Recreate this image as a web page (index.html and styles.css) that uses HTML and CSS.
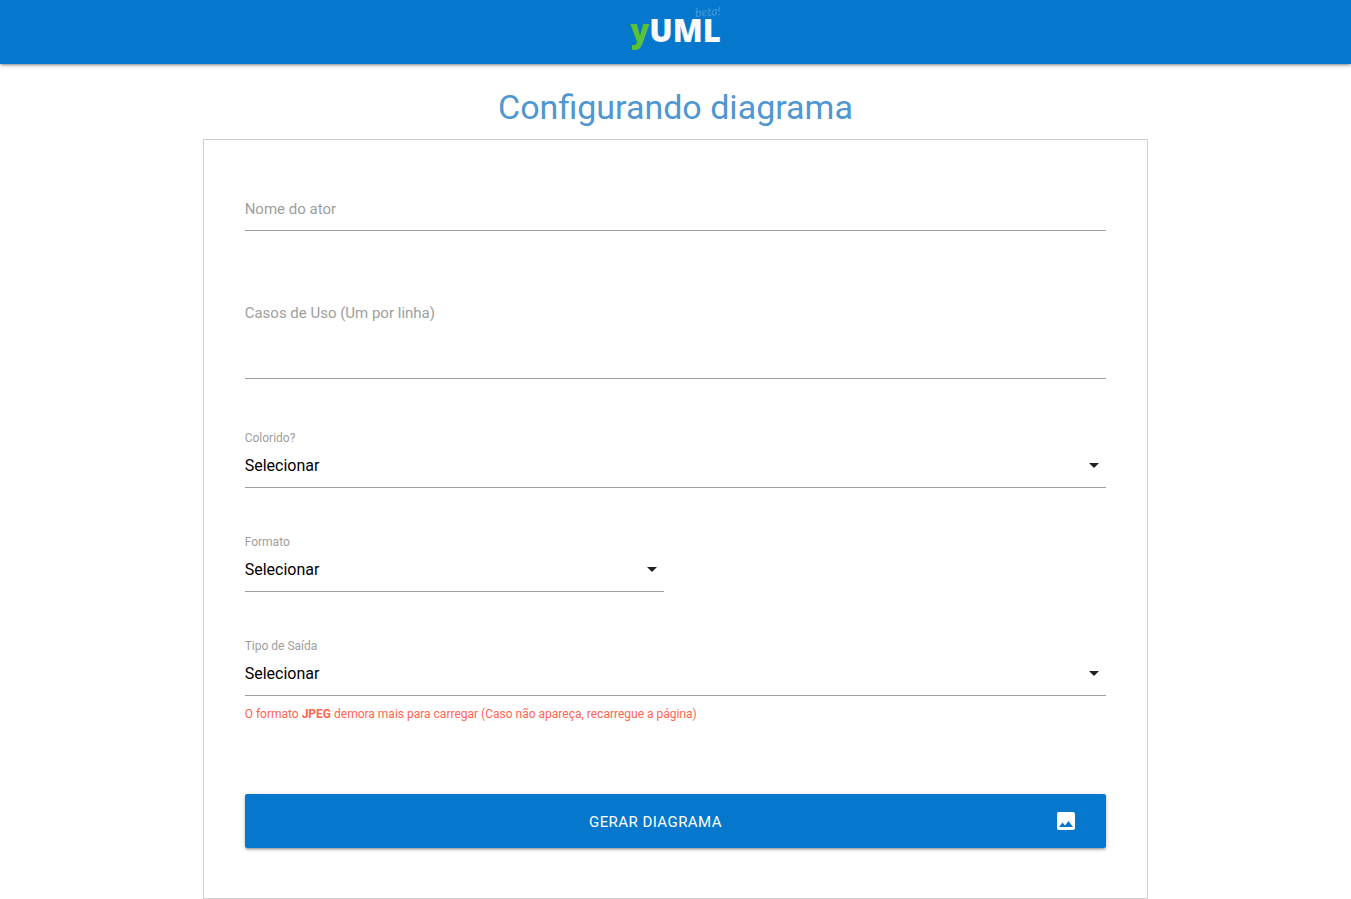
FILE: index.html
```html
<!DOCTYPE html>
<html lang="pt-BR">
<head>
<meta charset="utf-8">
<meta name="viewport" content="width=device-width, initial-scale=1">
<title>yUML - Configurando diagrama</title>
<link rel="stylesheet" href="styles.css">
</head>
<body>
<header class="navbar">
  <a class="logo" href="#"><span class="logo-y">y</span><span class="logo-uml">UML</span><span class="logo-beta">beta!</span></a>
</header>
<main class="container">
  <h1 class="title">Configurando diagrama</h1>
  <form class="card">
    <div class="field">
      <input class="control" type="text" id="ator">
      <label class="hint" for="ator">Nome do ator</label>
    </div>
    <div class="field field-area">
      <textarea class="control area" id="casos"></textarea>
      <label class="hint" for="casos">Casos de Uso (Um por linha)</label>
    </div>
    <div class="choice">
      <label class="caption" for="cor">Colorido?</label>
      <div class="picker">
        <select class="select" id="cor"><option>Selecionar</option></select>
        <svg class="caret" viewBox="0 0 24 24" aria-hidden="true"><path d="M7 10l5 5 5-5z"/></svg>
      </div>
    </div>
    <div class="choice choice-half">
      <label class="caption" for="formato">Formato</label>
      <div class="picker">
        <select class="select" id="formato"><option>Selecionar</option></select>
        <svg class="caret" viewBox="0 0 24 24" aria-hidden="true"><path d="M7 10l5 5 5-5z"/></svg>
      </div>
    </div>
    <div class="choice">
      <label class="caption" for="saida">Tipo de Saída</label>
      <div class="picker">
        <select class="select" id="saida"><option>Selecionar</option></select>
        <svg class="caret" viewBox="0 0 24 24" aria-hidden="true"><path d="M7 10l5 5 5-5z"/></svg>
      </div>
      <p class="note">O formato <b>JPEG</b> demora mais para carregar (Caso não apareça, recarregue a página)</p>
    </div>
    <button class="submit" type="button">
      <span class="submit-text">Gerar diagrama</span>
      <svg class="submit-icon" viewBox="0 0 24 24" aria-hidden="true"><path d="M21 19V5c0-1.100-.9-2-2-2H5c-1.100 0-2 .9-2 2v14c0 1.100.9 2 2 2h14c1.100 0 2-.9 2-2zM8.500 13.500l2.500 3.010L14.500 12l4.500 6H5l3.500-4.500z"/></svg>
    </button>
  </form>
</main>
</body>
</html>
```
FILE: styles.css
```css
* {
  box-sizing: border-box;
}

body {
  margin: 0;
  background: #fff;
  color: #212121;
  font-family: Roboto, "Liberation Sans", sans-serif;
  font-size: 15px;
  line-height: 24px;
}

.navbar {
  display: flex;
  justify-content: center;
  height: 64px;
  background: #0578cd;
  box-shadow: 0 2px 2px 0 rgba(0, 0, 0, 0.14), 0 3px 1px -2px rgba(0, 0, 0, 0.12), 0 1px 5px 0 rgba(0, 0, 0, 0.2);
}

.logo {
  position: relative;
  display: flex;
  padding-top: 8px;
  color: #fafafa;
  font-family: "Open Sans", sans-serif;
  font-size: 31px;
  font-weight: 800;
  line-height: 44px;
  text-decoration: none;
}

.logo-y {
  color: #5bc236;
}

.logo-beta {
  position: absolute;
  top: 5px;
  right: 0;
  color: #4598da;
  font-family: Lato, sans-serif;
  font-size: 12px;
  font-style: italic;
  font-weight: 400;
  line-height: 14px;
  transform: rotate(-5deg);
}

.container {
  width: 70%;
  margin: 0 auto;
}

.title {
  margin: 0;
  padding: 22px 0 11px;
  color: #4f97d1;
  font-size: 34px;
  font-weight: 400;
  line-height: 42px;
  text-align: center;
}

.card {
  padding: 46px 41px 50px;
  border: 1px solid #d0d0d0;
}

.field {
  display: grid;
}

.field-area {
  margin-top: 59px;
}

.control,
.hint {
  grid-area: 1 / 1;
}

.control {
  width: 100%;
  height: 45px;
  margin: 0;
  padding: 0;
  border: 0;
  border-bottom: 1px solid #9e9e9e;
  background: transparent;
  font: inherit;
  font-size: 16px;
  outline: none;
  resize: none;
}

.area {
  height: 89px;
  padding-top: 11px;
}

.hint {
  align-self: start;
  justify-self: start;
  padding-top: 11px;
  color: #9e9e9e;
  pointer-events: none;
}

.choice {
  margin-top: 45px;
}

.field-area + .choice {
  margin-top: 50px;
}

.choice-half {
  width: 419px;
  max-width: 100%;
}

.caption {
  display: block;
  color: #9e9e9e;
  font-size: 12px;
  line-height: 18px;
}

.picker {
  display: grid;
  align-items: center;
}

.select {
  grid-area: 1 / 1;
  width: 100%;
  height: 41px;
  margin: 0;
  padding: 0 24px 2px 0;
  border: 0;
  border-bottom: 1px solid #9e9e9e;
  border-radius: 0;
  appearance: none;
  background: transparent;
  color: #000;
  font: inherit;
  font-size: 16px;
}

.caret {
  grid-area: 1 / 1;
  justify-self: end;
  width: 24px;
  height: 24px;
  margin-bottom: 6px;
  fill: #212121;
  pointer-events: none;
}

.note {
  margin: 9px 0 0;
  color: #ff6550;
  font-size: 12px;
  line-height: 18px;
}

.submit {
  display: flex;
  align-items: center;
  gap: 16px;
  width: 100%;
  height: 54px;
  margin-top: 71px;
  padding: 0 28px;
  border: 0;
  border-radius: 2px;
  background: #0578cd;
  box-shadow: 0 2px 2px 0 rgba(0, 0, 0, 0.14), 0 3px 1px -2px rgba(0, 0, 0, 0.12), 0 1px 5px 0 rgba(0, 0, 0, 0.2);
  color: #fff;
  font: inherit;
  letter-spacing: 0.03em;
  text-transform: uppercase;
  cursor: pointer;
}

.submit-text {
  flex: 1;
  padding-top: 2px;
}

.submit-icon {
  width: 24px;
  height: 24px;
  fill: #fff;
}
```
